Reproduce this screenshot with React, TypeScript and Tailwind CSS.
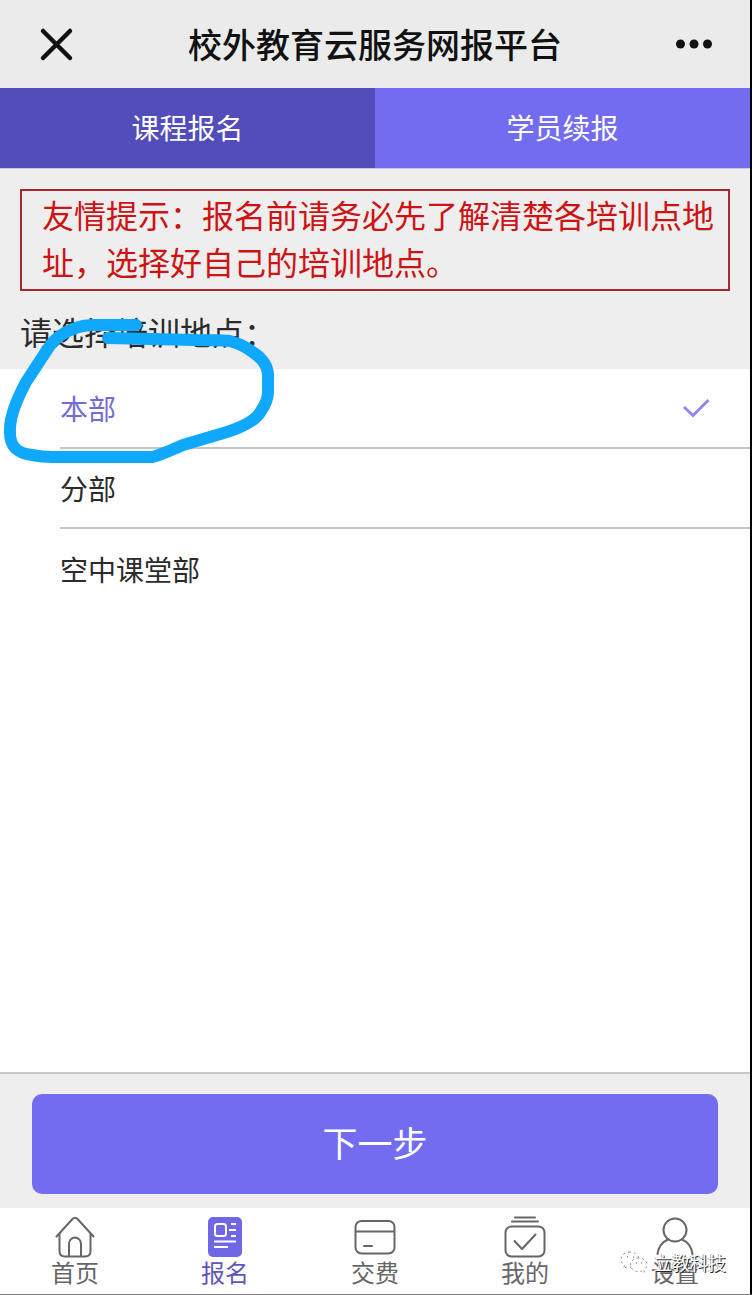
import { useState } from 'react';
import type { ReactNode } from 'react';

const TABS = ['课程报名', '学员续报'];
const PLACES = ['本部', '分部', '空中课堂部'];

const STROKE = {
  fill: 'none',
  stroke: 'currentColor',
  strokeWidth: 2,
  strokeLinecap: 'round',
  strokeLinejoin: 'round',
} as const;

function HomeIcon() {
  return (
    <svg viewBox="0 0 42 42" className="size-full" {...STROKE} aria-hidden="true">
      <path d="M2.500 20.500 L18.500 3 Q21 0.500 23.500 3 L39.500 20.500" />
      <path d="M5.500 18 V35 Q5.500 40.500 11 40.500 H31 Q36.500 40.500 36.500 35 V18" />
      <path d="M15 40 V28 A6 6.500 0 0 1 27 28 V40" />
    </svg>
  );
}

function FormIcon() {
  return (
    <svg viewBox="0 0 42 42" className="size-full" fill="none" aria-hidden="true">
      <rect x="4" y="1" width="34" height="40" rx="5" fill="#6f67e6" />
      <rect x="11" y="8" width="11" height="12" rx="2.500" stroke="#fff" strokeWidth="2" />
      <path d="M27 8 H32 M25 14 H32 M27 20 H32 M10 25.500 H32 M10 31 H24" stroke="#fff" strokeWidth="2" />
    </svg>
  );
}

function CardIcon() {
  return (
    <svg viewBox="0 0 42 42" className="size-full" {...STROKE} aria-hidden="true">
      <rect x="1.500" y="5" width="39" height="32.500" rx="6" />
      <path d="M2 15.500 H40 M10 30 H18" />
    </svg>
  );
}

function MineIcon() {
  return (
    <svg viewBox="0 0 42 42" className="size-full" {...STROKE} aria-hidden="true">
      <path d="M11 1.500 H31 M8 5.500 H34" />
      <rect x="1.500" y="10.500" width="39" height="30" rx="6" />
      <path d="M10.500 25 L18 33 L31.500 18.500" />
    </svg>
  );
}

function UserIcon() {
  return (
    <svg viewBox="0 0 42 42" className="size-full" {...STROKE} aria-hidden="true">
      <circle cx="21" cy="14" r="11.500" />
      <path d="M14 23.500 C8 26 4.500 31 3.500 38 M28 23.500 C34 26 37.500 31 38.500 38" />
    </svg>
  );
}

const NAV: { label: string; icon: ReactNode; active?: boolean }[] = [
  { label: '首页', icon: <HomeIcon /> },
  { label: '报名', icon: <FormIcon />, active: true },
  { label: '交费', icon: <CardIcon /> },
  { label: '我的', icon: <MineIcon /> },
  { label: '设置', icon: <UserIcon /> },
];

function Watermark() {
  return (
    <div className="pointer-events-none absolute right-6 bottom-5 flex items-center gap-1.5" aria-hidden="true">
      <svg
        viewBox="0 0 28 24"
        className="h-6 w-7"
        fill="#fff"
        stroke="#888"
        strokeWidth="1"
        strokeDasharray="2 3"
      >
        <path d="M10 2 C4.500 2 1 5.500 1 9.500 C1 12 2.300 14 4.500 15.500 L3.500 18.500 L7 16.800 C8 17 9 17 10 17 C15 17 19 13.800 19 9.500 C19 5.500 15 2 10 2 Z" />
        <path d="M18.500 8 C14 8 10.500 11 10.500 14.500 C10.500 18.500 14 21.500 18.500 21.500 C19.500 21.500 20.500 21.300 21.500 21 L24.500 22.700 L23.800 20 C25.800 18.700 27 16.700 27 14.500 C27 11 23.500 8 18.500 8 Z" />
        <path d="M7 7 h1 M13 7 h1 M16 13 h1 M21 13 h1" stroke="#555" strokeDasharray="none" />
      </svg>
      <span className="text-lg leading-6 text-white [text-shadow:1px_1px_0_#222,-1px_0_0_#aaa]">立教科技</span>
    </div>
  );
}

export default function App() {
  const [tab, setTab] = useState(TABS[0]);
  const [place, setPlace] = useState(PLACES[0]);

  return (
    <div className="flex min-h-screen flex-col border-r-2 border-b border-r-black border-b-[#808080] bg-[#eeeeee] font-['Noto_Sans_CJK_SC',sans-serif] text-[#2b2b2b]">
      <header className="flex h-[88px] items-center justify-between bg-[#ebebeb] px-9 text-[#111]">
        <button type="button" aria-label="关闭" className="size-10">
          <svg viewBox="0 0 40 40" className="size-full" fill="none" stroke="currentColor" strokeWidth="4.500" strokeLinecap="round">
            <path d="M7 7 L34 34 M34 7 L7 34" />
          </svg>
        </button>
        <h1 className="text-[34px] leading-10 font-medium">校外教育云服务网报平台</h1>
        <button type="button" aria-label="更多" className="size-10">
          <svg viewBox="0 0 40 40" className="size-full" fill="currentColor">
            <circle cx="6.500" cy="20" r="4.500" />
            <circle cx="20" cy="20" r="4.500" />
            <circle cx="33.500" cy="20" r="4.500" />
          </svg>
        </button>
      </header>

      <div className="flex h-[81px] border-b border-[#c9c8e0]">
        {TABS.map((t) => (
          <button
            key={t}
            type="button"
            onClick={() => setTab(t)}
            className={`flex-1 pb-0.5 text-[28px] text-white ${tab === t ? 'bg-[#524dbb]' : 'bg-[#736cf1]'}`}
          >
            {t}
          </button>
        ))}
      </div>

      <p className="mx-5 mt-5 border-2 border-[#a5282c] pr-3 pb-1 pl-5 text-[32px] leading-[47px] text-[#cc1414]">
        友情提示：报名前请务必先了解清楚各培训点地址，选择好自己的培训地点。
      </p>

      <div className="relative flex flex-1 flex-col">
        <p id="place-label" className="px-5 pt-4 pb-3.5 text-[32px] leading-[48px]">
          请选择培训地点：
        </p>
        <div
          role="radiogroup"
          aria-labelledby="place-label"
          className="flex-1 border-b-2 border-[#c8c8c8] bg-[#fefefe] pl-[60px]"
        >
          {PLACES.map((p) => (
            <label
              key={p}
              className="relative flex h-20 cursor-pointer items-center justify-between border-b-2 border-[#c4c4c6] pr-10 text-[28px] last:border-b-0 has-checked:text-[#736cd0]"
            >
              <span>{p}</span>
              <input type="radio" name="place" checked={place === p} onChange={() => setPlace(p)} className="sr-only" />
              {place === p && (
                <svg viewBox="0 0 28 20" className="h-5 w-7" fill="none" stroke="#9088e6" strokeWidth="3" aria-hidden="true">
                  <path d="M2 9 L11 17.500 L26.500 2" />
                </svg>
              )}
            </label>
          ))}
        </div>
        <svg
          viewBox="0 312 280 160"
          className="pointer-events-none absolute top-5 left-0 h-40 w-[280px]"
          fill="none"
          stroke="#0fa8fa"
          strokeWidth="12"
          strokeLinecap="round"
          strokeLinejoin="round"
          aria-hidden="true"
        >
          <path d="M136 326 L92 326 C72 327 55 337 47 351 L26 383 C17 400 10 416 10 430 C9 447 16 454 32 456 Q42 458 52 458 H152 Q158 457 183 446 L227 433 Q255 424 261 412 Q268 402 268 393 V375 Q267 363 254 354 Q242 345 230 342 Q215 341 195 341 L108 339" />
        </svg>
      </div>

      <div className="px-8 pt-5 pb-3.5">
        <button type="button" className="h-[100px] w-full rounded-[10px] bg-[#736cf1] pb-1 text-[35px] text-white">
          下一步
        </button>
      </div>

      <nav className="relative flex h-[86px] bg-[#fefefe]">
        {NAV.map((n) => (
          <a
            key={n.label}
            href="#"
            className={`flex flex-1 flex-col items-center pt-2 ${n.active ? 'text-[#5f56b8]' : 'text-[#666]'}`}
          >
            <span className="size-[42px]">{n.icon}</span>
            <span className="text-2xl leading-7">{n.label}</span>
          </a>
        ))}
        <Watermark />
      </nav>
    </div>
  );
}
